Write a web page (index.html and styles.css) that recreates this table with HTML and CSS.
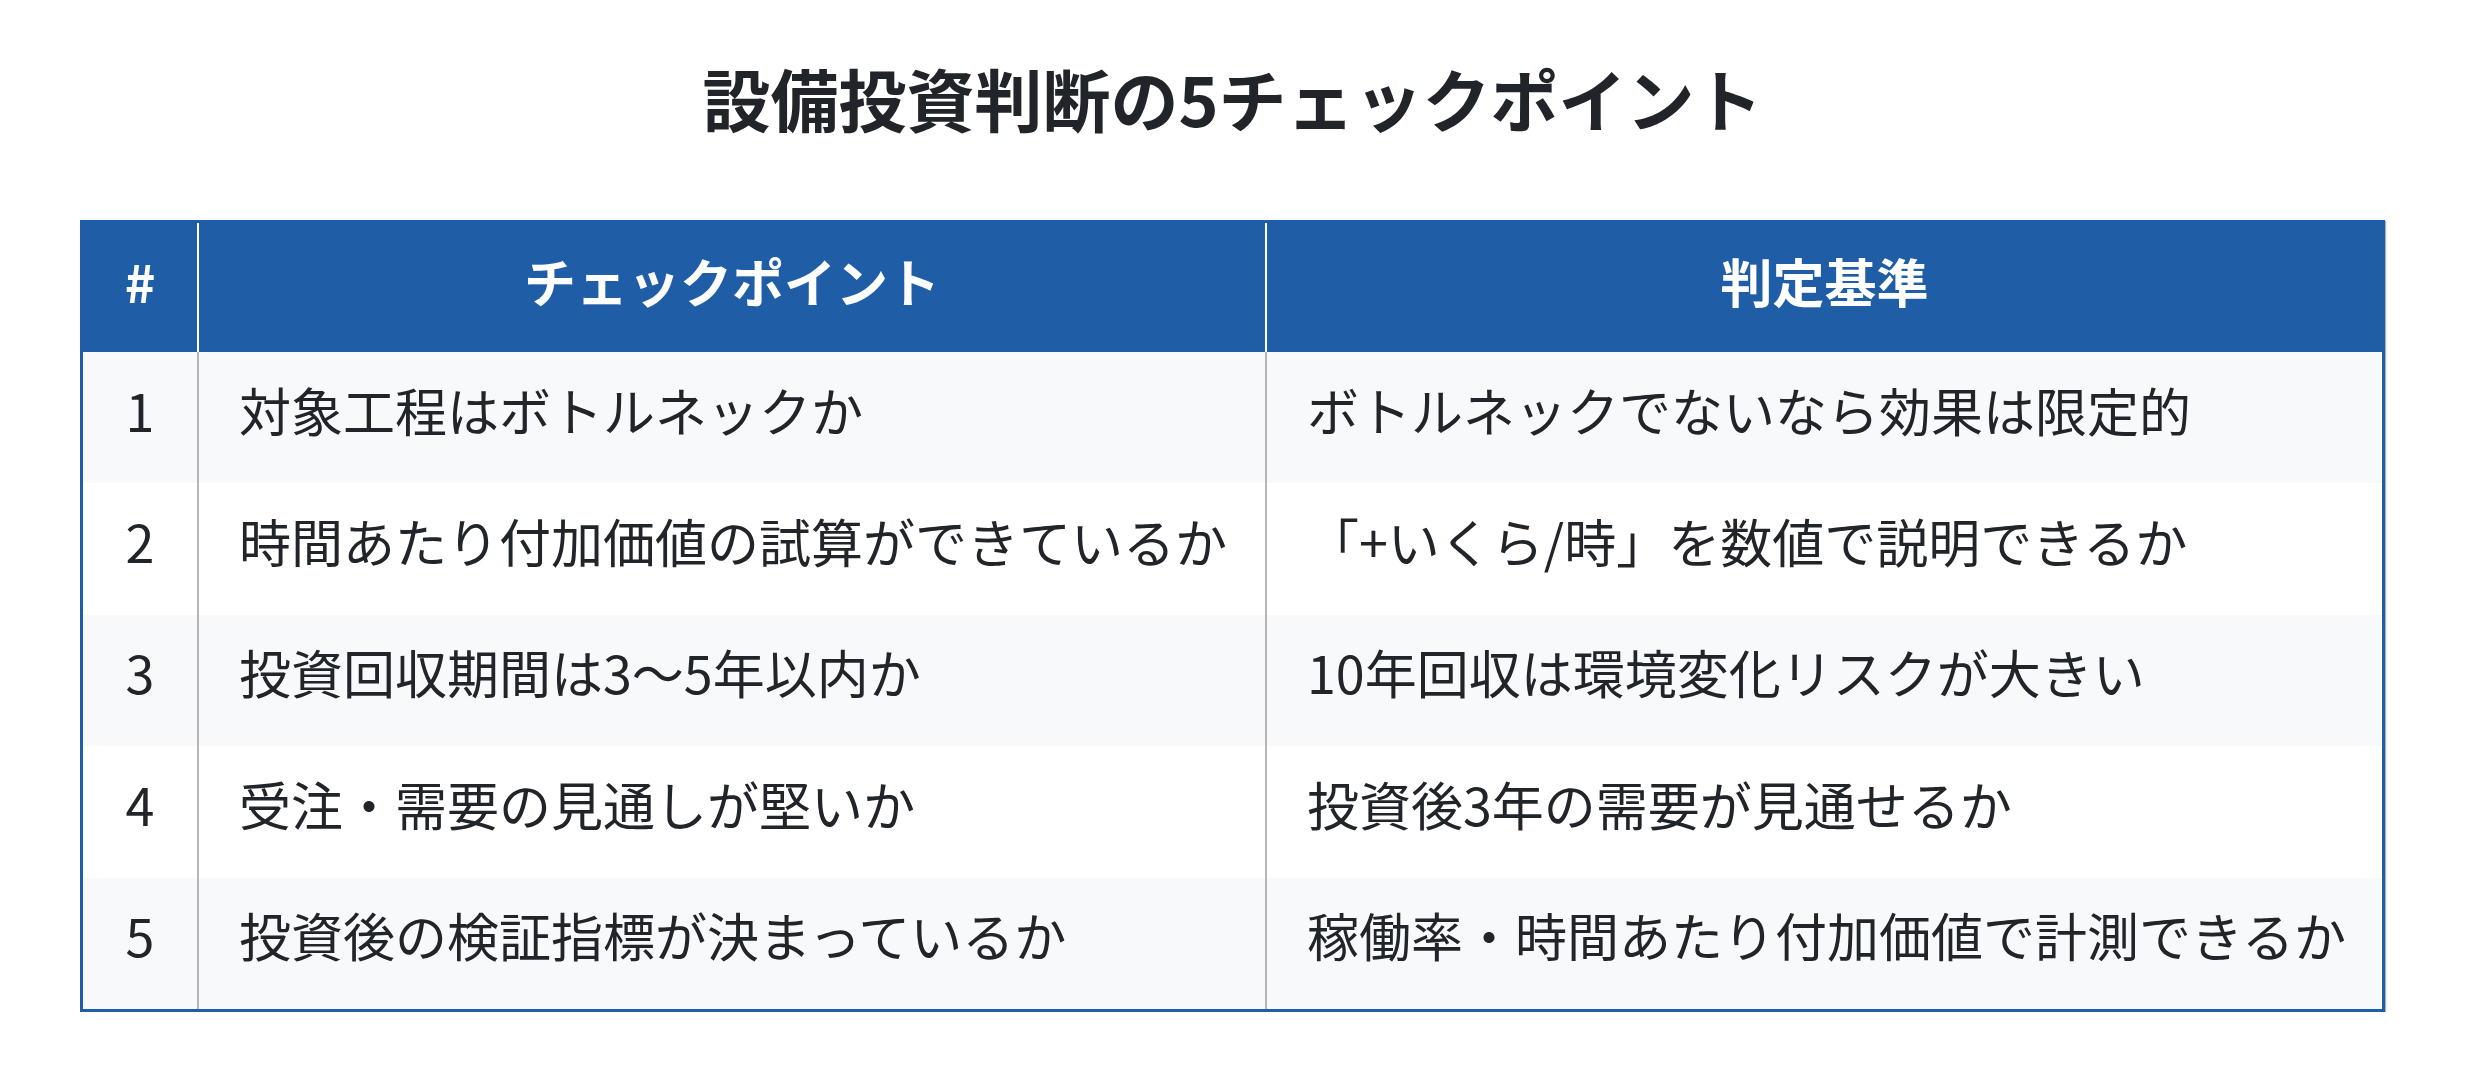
FILE: index.html
```html
<!DOCTYPE html>
<html lang="ja">
<head>
<meta charset="utf-8">
<title>設備投資判断の5チェックポイント</title>
<link rel="stylesheet" href="styles.css">
</head>
<body>
<main class="page">
  <h1 class="title">設備投資判断の5チェックポイント</h1>
  <div class="table" role="table">
    <div class="row head" role="row">
      <div class="cell num" role="columnheader">#</div>
      <div class="cell center" role="columnheader">チェックポイント</div>
      <div class="cell center" role="columnheader">判定基準</div>
    </div>
    <div class="row odd" role="row">
      <div class="cell num" role="cell">1</div>
      <div class="cell" role="cell">対象工程はボトルネックか</div>
      <div class="cell" role="cell">ボトルネックでないなら効果は限定的</div>
    </div>
    <div class="row" role="row">
      <div class="cell num" role="cell">2</div>
      <div class="cell" role="cell">時間あたり付加価値の試算ができているか</div>
      <div class="cell" role="cell">「+いくら/時」を数値で説明できるか</div>
    </div>
    <div class="row odd" role="row">
      <div class="cell num" role="cell">3</div>
      <div class="cell" role="cell">投資回収期間は3〜5年以内か</div>
      <div class="cell" role="cell">10年回収は環境変化リスクが大きい</div>
    </div>
    <div class="row" role="row">
      <div class="cell num" role="cell">4</div>
      <div class="cell" role="cell">受注・需要の見通しが堅いか</div>
      <div class="cell" role="cell">投資後3年の需要が見通せるか</div>
    </div>
    <div class="row odd" role="row">
      <div class="cell num" role="cell">5</div>
      <div class="cell" role="cell">投資後の検証指標が決まっているか</div>
      <div class="cell" role="cell">稼働率・時間あたり付加価値で計測できるか</div>
    </div>
  </div>
</main>
</body>
</html>
```

FILE: styles.css
```css
* {
  box-sizing: border-box;
}

html, body {
  margin: 0;
  padding: 0;
  background: #ffffff;
}

body {
  font-family: "Noto Sans CJK JP", "Noto Sans", sans-serif;
  color: #212529;
}

.page {
  padding: 57px 0 0;
}

.title {
  margin: 0;
  text-align: center;
  font-size: 68px;
  line-height: 82px;
  font-weight: 700;
  color: #212529;
}

.table {
  width: 2305px;
  margin: 81px auto 0;
  border: 3px solid #1f5ea7;
  box-shadow: 1px 1px 1px rgba(0, 0, 0, 0.3);
  background: #ffffff;
}

.row {
  display: grid;
  grid-template-columns: 114px 1068px 1fr;
  height: 131.4px;
}

.row.head {
  height: 129px;
  background: #1f5ea7;
  color: #ffffff;
  font-weight: 700;
}

.row.odd {
  background: #f8f9fa;
}

.cell {
  display: flex;
  align-items: center;
  padding: 0 40px 16px;
  font-size: 52px;
  line-height: 62px;
  white-space: nowrap;
}

.cell + .cell {
  border-left: 2px solid #b5b5b5;
}

.head .cell + .cell {
  border-left-color: #ffffff;
}

.head .cell {
  padding-bottom: 14px;
}

.cell.num {
  justify-content: center;
  padding-left: 0;
  padding-right: 0;
}

.cell.center {
  justify-content: center;
}
```
